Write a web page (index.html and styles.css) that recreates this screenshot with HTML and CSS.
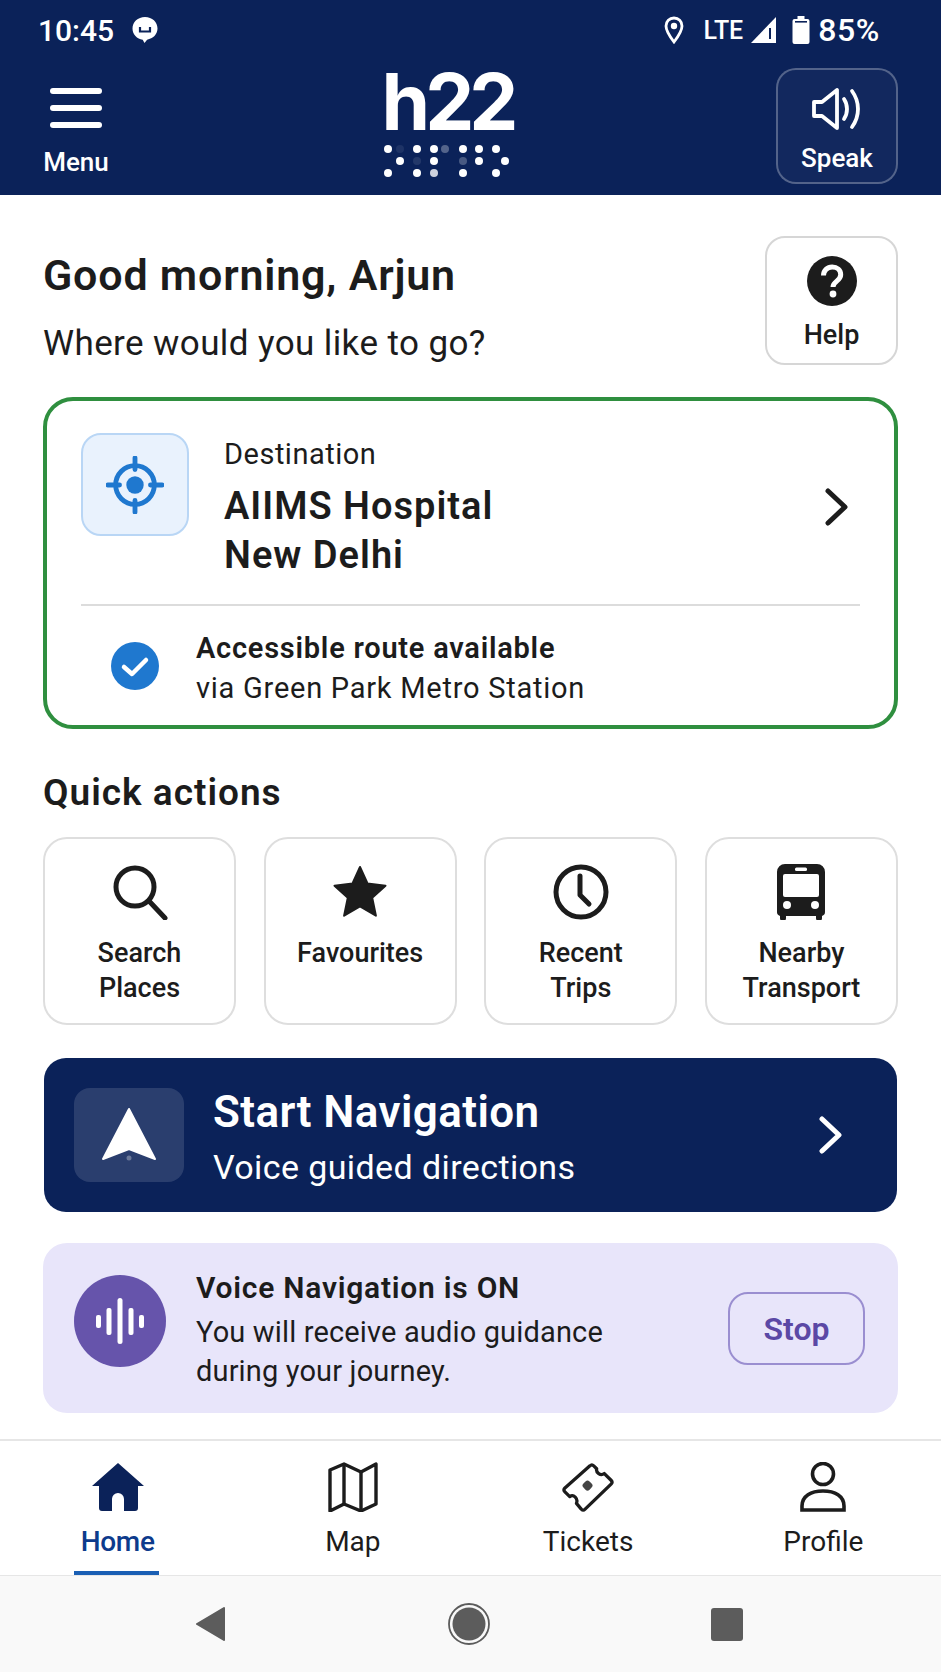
FILE: index.html
```html
<!DOCTYPE html>
<html lang="en">
  <head>
    <meta charset="UTF-8" />
    <meta name="viewport" content="width=device-width, initial-scale=1.0" />
    <title>h22 Home</title>
    <link rel="stylesheet" href="styles.css">
  </head>
  <body>
    <header class="top">
      <div class="status">
        <div class="status-left">
          <span class="time">10:45</span>
          <svg class="msg-icon" viewBox="0 0 28 28"><path d="M14 1C6.800 1 1.500 6 1.500 12.600c0 6 4.600 10.400 10.200 11.200L13.500 27l2.600-3.300C22 22.800 26.500 18.400 26.500 12.600 26.500 6 21.200 1 14 1z" fill="#fff"/><path d="M9 11v4.500h10V11" fill="none" stroke="#0b2259" stroke-width="2.200"/></svg>
        </div>
        <div class="status-right">
          <svg class="pin" viewBox="0 0 20 28"><path d="M10 2C5.400 2 2 5.500 2 10c0 5.500 8 16 8 16s8-10.500 8-16c0-4.500-3.400-8-8-8z" fill="none" stroke="#fff" stroke-width="2.800"/><circle cx="10" cy="10" r="3.200" fill="#fff"/></svg>
          <span class="lte">LTE</span>
          <svg class="signal" viewBox="0 0 27 28"><path d="M26 1v26H1z" fill="#fff"/><rect x="19" y="12" width="2" height="11" fill="#0b2259"/></svg>
          <svg class="battery" viewBox="0 0 18 28"><path d="M5.500 0h7v3h3a2 2 0 0 1 2 2v21a2 2 0 0 1-2 2h-13a2 2 0 0 1-2-2V5a2 2 0 0 1 2-2h3z" fill="#fff"/><rect x="3" y="5" width="12" height="1.600" fill="#0b2259"/></svg>
          <span class="pct">85%</span>
        </div>
      </div>
      <div class="bar">
        <button class="menu">
          <span class="burger"><i></i><i></i><i></i></span>
          <span>Menu</span>
        </button>
        <div class="logo">
          <div class="logo-word">h22</div>
          <svg class="braille" viewBox="0 0 128 36">
            <g fill="#fff">
              <circle cx="5" cy="5" r="4"/><circle cx="34" cy="5" r="4"/><circle cx="51" cy="5" r="4"/>
              <circle cx="80" cy="5" r="4"/><circle cx="96" cy="5" r="4"/><circle cx="113" cy="5" r="4"/>
              <circle cx="17" cy="17" r="4"/><circle cx="51" cy="17" r="4"/><circle cx="96" cy="17" r="4"/><circle cx="122" cy="17" r="4"/>
              <circle cx="5" cy="29" r="4"/><circle cx="34" cy="29" r="4"/><circle cx="51" cy="29" r="4" opacity=".8"/>
              <circle cx="80" cy="29" r="4"/><circle cx="113" cy="29" r="4"/>
              <circle cx="17" cy="5" r="4" opacity=".08"/><circle cx="62" cy="5" r="4" opacity=".3"/>
              <circle cx="34" cy="17" r="4" opacity=".1"/><circle cx="80" cy="17" r="4" opacity=".25"/>
            </g>
          </svg>
        </div>
        <button class="speak">
          <svg class="speak-icon" viewBox="0 0 50 42" fill="none" stroke="#fff" stroke-width="3.800" stroke-linejoin="round" stroke-linecap="round"><path d="M2 14h8L25 2v38L10 28H2z"/><path d="M32 11c4 6 4 14 0 20"/><path d="M40 3c8 11 8 25 0 36"/></svg>
          <span>Speak</span>
        </button>
      </div>
    </header>

    <main class="content">
      <section class="hello">
        <div class="hello-text">
          <h1>Good morning, Arjun</h1>
          <p>Where would you like to go?</p>
        </div>
        <button class="help">
          <svg class="help-icon" viewBox="0 0 52 52"><circle cx="26" cy="26" r="25" fill="#1c1c1c"/><path d="M17.500 20.500c0-5 3.800-8.500 8.700-8.500s8.500 3.200 8.500 7.800c0 6.200-7.700 6.400-7.700 12.200" fill="none" stroke="#fff" stroke-width="5"/><circle cx="27" cy="39" r="3.400" fill="#fff"/></svg>
          <span>Help</span>
        </button>
      </section>

      <section class="dest">
        <div class="dest-top">
          <div class="target">
            <svg viewBox="0 0 60 60" fill="none" stroke="#1f78cf" stroke-width="5"><circle cx="30" cy="30" r="20"/><path d="M30 2v12M30 46v12M2 30h12M46 30h12" stroke-linecap="round"/><circle cx="30" cy="30" r="9" fill="#1f78cf" stroke="none"/></svg>
          </div>
          <div class="dest-text">
            <div class="dest-label">Destination</div>
            <div class="dest-name">AIIMS Hospital<br>New Delhi</div>
          </div>
          <svg class="chev" viewBox="0 0 24 38" fill="none" stroke="#1c1c1c" stroke-width="5" stroke-linecap="round" stroke-linejoin="round"><path d="M3 3l17 16L3 35"/></svg>
        </div>
        <div class="dest-route">
          <svg class="check" viewBox="0 0 48 48"><circle cx="24" cy="24" r="24" fill="#1f78cf"/><path d="M13 25l8 7 14-14" fill="none" stroke="#fff" stroke-width="4.500" stroke-linecap="round" stroke-linejoin="round"/></svg>
          <div>
            <div class="route-title">Accessible route available</div>
            <div class="route-sub">via Green Park Metro Station</div>
          </div>
        </div>
      </section>

      <h2 class="section-title">Quick actions</h2>
      <section class="quick">
        <button class="tile">
          <svg viewBox="0 0 56 56" fill="none" stroke="#1c1c1c" stroke-width="5"><circle cx="23" cy="23" r="19"/><path d="M37 37l16 17" stroke-linecap="round"/></svg>
          <span>Search<br>Places</span>
        </button>
        <button class="tile">
          <svg viewBox="0 0 56 56"><path d="M28 3l7.500 16.500 18 2.200-13.300 12 3.700 18L28 42.500 12.100 51.700l3.700-18L2.500 21.700l18-2.200z" fill="#1c1c1c" stroke="#1c1c1c" stroke-width="2" stroke-linejoin="round"/></svg>
          <span>Favourites</span>
        </button>
        <button class="tile">
          <svg viewBox="0 0 56 56" fill="none" stroke="#1c1c1c" stroke-width="5"><circle cx="28" cy="28" r="25"/><path d="M27 12v19l9 9" stroke-linecap="round" stroke-linejoin="round"/></svg>
          <span>Recent<br>Trips</span>
        </button>
        <button class="tile">
          <svg viewBox="0 0 56 56"><path d="M12 0h32a8 8 0 0 1 8 8v40a4 4 0 0 1-3 3.900V54a3 3 0 0 1-6 0v-2H13v2a3 3 0 0 1-6 0v-2.100A4 4 0 0 1 4 48V8a8 8 0 0 1 8-8z" fill="#1c1c1c"/><rect x="10" y="10" width="36" height="23" rx="2" fill="#fff"/><rect x="22" y="3.500" width="12" height="3.500" rx="1.500" fill="#fff"/><circle cx="14" cy="41" r="4" fill="#fff"/><circle cx="42" cy="41" r="4" fill="#fff"/></svg>
          <span>Nearby<br>Transport</span>
        </button>
      </section>

      <button class="start">
        <span class="start-icon">
          <svg viewBox="0 0 56 56"><path d="M28 2L54 52 28 42 2 52z" fill="#fff" stroke="#fff" stroke-width="2" stroke-linejoin="round"/><circle cx="28" cy="51" r="2.500" fill="#fff" opacity=".3"/></svg>
        </span>
        <span class="start-text">
          <span class="start-title">Start Navigation</span>
          <span class="start-sub">Voice guided directions</span>
        </span>
        <svg class="chev" viewBox="0 0 24 38" fill="none" stroke="#fff" stroke-width="5" stroke-linecap="round" stroke-linejoin="round"><path d="M3 3l17 16L3 35"/></svg>
      </button>

      <section class="voice">
        <div class="voice-icon">
          <svg viewBox="0 0 48 46" fill="#fff"><rect x="0" y="17" width="5" height="13" rx="2"/><rect x="10.500" y="10" width="5" height="27" rx="2"/><rect x="21.500" y="0" width="5" height="46" rx="2.500"/><rect x="32.500" y="10" width="5" height="27" rx="2"/><rect x="43" y="17" width="5" height="13" rx="2"/></svg>
        </div>
        <div class="voice-text">
          <div class="voice-title">Voice Navigation is ON</div>
          <div class="voice-sub">You will receive audio guidance<br>during your journey.</div>
        </div>
        <button class="stop">Stop</button>
      </section>
    </main>

    <nav class="tabs">
      <a class="tab active">
        <svg viewBox="0 0 52 50"><path d="M26 1L52 24H46V46a3 3 0 0 1-3 3H32V37a6 6 0 0 0-12 0V49H10a3 3 0 0 1-3-3V24H0z" fill="#0b2259"/></svg>
        <span>Home</span>
      </a>
      <a class="tab">
        <svg viewBox="0 0 50 50" fill="none" stroke="#1c1c1c" stroke-width="3.400" stroke-linejoin="round"><path d="M2 8l14-6 17 8 15-8v40l-15 7-17-7-14 7z"/><path d="M16 2v40M33 10v39"/></svg>
        <span>Map</span>
      </a>
      <a class="tab">
        <svg viewBox="0 0 54 52" fill="none" stroke="#1c1c1c" stroke-width="3.400" stroke-linejoin="round"><path d="M29 4Q31 2 33 4L36 7C35 11 40 15 44 12L51 19Q53 21 51 23L24 49Q22 51 20 49L15 43C17 38 12 33 8 36L3 31Q1 29 3 27z"/><rect x="22" y="20" width="9" height="9" rx="3" transform="rotate(45 26.500 24.500)" fill="#444" stroke="none"/></svg>
        <span>Tickets</span>
      </a>
      <a class="tab">
        <svg viewBox="0 0 46 50" fill="none" stroke="#1c1c1c" stroke-width="3.600"><circle cx="23" cy="12" r="10.500"/><path d="M2 48v-4c0-10 9-15 21-15s21 5 21 15v4z"/></svg>
        <span>Profile</span>
      </a>
    </nav>

    <footer class="sysbar">
      <svg class="sys-back" viewBox="0 0 31 34"><path d="M29 1L2 17l27 16z" fill="#5c5c5c" stroke="#5c5c5c" stroke-width="2" stroke-linejoin="round"/></svg>
      <svg class="sys-home" viewBox="0 0 42 42"><circle cx="21" cy="21" r="20" fill="none" stroke="#5c5c5c" stroke-width="1.800"/><circle cx="21" cy="21" r="16.500" fill="#5c5c5c"/></svg>
      <span class="sys-recent"></span>
    </footer>
  </body>
</html>
```

FILE: styles.css
```css
* {
  margin: 0;
  padding: 0;
  box-sizing: border-box;
  font-family: Roboto, "Liberation Sans", sans-serif;
}
html, body {
  height: 100%;
}
body {
  width: 941px;
  height: 1672px;
  display: flex;
  flex-direction: column;
  background-color: #fff;
  color: #1c1c1c;
  overflow: hidden;
}
button {
  background: none;
  border: none;
  color: inherit;
}

/* header */
.top {
  height: 195px;
  background-color: #0b2259;
  color: #fff;
  padding: 0 43px;
}
.status {
  height: 60px;
  margin: 0 18px 8px -5px;
  display: flex;
  justify-content: space-between;
  align-items: center;
}
.status-left, .status-right {
  display: flex;
  align-items: center;
}
.time {
  font-size: 30px;
  font-weight: 500;
}
.msg-icon {
  width: 28px;
  height: 28px;
  margin-left: 17px;
}
.pin {
  width: 20px;
  height: 28px;
}
.lte {
  font-size: 25px;
  font-weight: 500;
  margin-left: 19px;
}
.signal {
  width: 27px;
  height: 28px;
  margin-left: 7px;
}
.battery {
  width: 18px;
  height: 28px;
  margin-left: 15px;
}
.pct {
  font-size: 32px;
  font-weight: 500;
  letter-spacing: 0.6px;
  margin-left: 8px;
}
.bar {
  height: 116px;
  display: flex;
  justify-content: space-between;
  align-items: center;
}
.menu {
  width: 66px;
  display: flex;
  flex-direction: column;
  align-items: center;
  gap: 19px;
  font-size: 26px;
  font-weight: 500;
  padding-top: 12px;
}
.burger {
  width: 52px;
  display: flex;
  flex-direction: column;
  gap: 11px;
}
.burger i {
  display: block;
  height: 6px;
  border-radius: 3px;
  background-color: #fff;
}
.logo {
  display: flex;
  flex-direction: column;
  align-items: center;
  margin-left: 10px;
}
.logo-word {
  font-family: Inter, sans-serif;
  font-size: 78px;
  line-height: 72px;
  font-weight: 700;
  letter-spacing: -5px;
  margin-top: -6px;
}
.braille {
  display: block;
  width: 128px;
  height: 36px;
  margin-top: 6px;
}
.speak {
  width: 122px;
  height: 116px;
  border: 2px solid rgba(255, 255, 255, 0.28);
  border-radius: 20px;
  background-color: rgba(255, 255, 255, 0.03);
  display: flex;
  flex-direction: column;
  align-items: center;
  font-size: 26px;
  font-weight: 500;
  padding-top: 18px;
  gap: 13px;
}
.speak-icon {
  width: 50px;
  height: 42px;
}

/* main */
.content {
  flex: 1;
  padding: 41px 43px 0;
}
.hello {
  display: flex;
  justify-content: space-between;
}
.hello-text {
  padding-top: 16px;
}
.hello-text h1 {
  font-size: 43px;
  line-height: 46px;
  font-weight: 600;
  letter-spacing: 0.8px;
}
.hello-text p {
  font-size: 35px;
  line-height: 40px;
  letter-spacing: 0.4px;
  margin-top: 26px;
}
.help {
  width: 133px;
  height: 129px;
  border: 2px solid #d6d6d6;
  border-radius: 20px;
  display: flex;
  flex-direction: column;
  align-items: center;
  font-size: 27px;
  font-weight: 500;
  padding-top: 17px;
  gap: 12px;
}
.help-icon {
  width: 52px;
  height: 52px;
}
.dest {
  margin-top: 32px;
  height: 332px;
  border: 4px solid #2f8f3f;
  border-radius: 30px;
  padding: 32px 34px 0;
}
.dest-top {
  height: 173px;
  display: flex;
  align-items: flex-start;
  border-bottom: 2px solid #dcdcdc;
}
.target {
  width: 108px;
  height: 103px;
  border: 2px solid #b9d6f5;
  border-radius: 20px;
  background-color: #e9f2fd;
  display: flex;
  justify-content: center;
  align-items: center;
}
.target svg {
  width: 58px;
  height: 58px;
}
.dest-text {
  flex: 1;
  margin-left: 35px;
  padding-top: 4px;
}
.dest-label {
  font-size: 29px;
  line-height: 34px;
  letter-spacing: 0.5px;
}
.dest-name {
  font-size: 38px;
  line-height: 49px;
  font-weight: 600;
  letter-spacing: 1px;
  margin-top: 11px;
}
.dest .chev {
  width: 24px;
  height: 38px;
  margin: 55px 11px 0 0;
}
.dest-route {
  display: flex;
  align-items: center;
  padding: 24px 0 0 30px;
}
.check {
  width: 48px;
  height: 48px;
  margin: 0 37px 4px 0;
}
.route-title {
  font-size: 29px;
  line-height: 36px;
  font-weight: 600;
  letter-spacing: 0.75px;
}
.route-sub {
  font-size: 29px;
  line-height: 36px;
  letter-spacing: 0.75px;
  margin-top: 4px;
}
.section-title {
  font-size: 37px;
  line-height: 44px;
  font-weight: 600;
  letter-spacing: 1px;
  margin-top: 42px;
}
.quick {
  display: flex;
  justify-content: space-between;
  margin-top: 22px;
}
.tile {
  width: 193px;
  height: 188px;
  border: 2px solid #dedede;
  border-radius: 24px;
  display: flex;
  flex-direction: column;
  align-items: center;
  font-size: 27px;
  line-height: 35px;
  font-weight: 500;
  padding-top: 25px;
  gap: 16px;
}
.tile svg {
  width: 56px;
  height: 56px;
}
.start {
  width: 853px;
  height: 154px;
  margin: 33px 1px 0;
  background-color: #0b2259;
  color: #fff;
  border-radius: 22px;
  display: flex;
  align-items: center;
  padding: 0 54px 0 30px;
  text-align: left;
}
.start-icon {
  width: 110px;
  height: 94px;
  border-radius: 16px;
  background-color: rgba(255, 255, 255, 0.13);
  display: flex;
  justify-content: center;
  align-items: center;
}
.start-icon svg {
  width: 56px;
  height: 56px;
}
.start-text {
  flex: 1;
  margin-left: 29px;
  padding-top: 4px;
  display: flex;
  flex-direction: column;
}
.start-title {
  font-size: 44px;
  line-height: 50px;
  font-weight: 600;
  letter-spacing: 0.4px;
}
.start-sub {
  font-size: 34px;
  line-height: 40px;
  letter-spacing: 0.4px;
  margin-top: 10px;
}
.start .chev {
  width: 24px;
  height: 38px;
}
.voice {
  height: 170px;
  margin-top: 31px;
  background-color: #e8e5fa;
  border-radius: 24px;
  display: flex;
  align-items: center;
  padding: 0 33px 0 31px;
}
.voice-icon {
  width: 92px;
  height: 92px;
  margin-bottom: 14px;
  border-radius: 50%;
  background-color: #6654ab;
  display: flex;
  justify-content: center;
  align-items: center;
}
.voice-icon svg {
  width: 48px;
  height: 46px;
}
.voice-text {
  flex: 1;
  margin-left: 30px;
  padding-top: 4px;
}
.voice-title {
  font-size: 30px;
  line-height: 38px;
  font-weight: 600;
  letter-spacing: 0.75px;
}
.voice-sub {
  font-size: 29px;
  line-height: 39px;
  letter-spacing: 0.15px;
  margin-top: 6px;
}
.stop {
  width: 137px;
  height: 73px;
  border: 2px solid #9a8ed0;
  border-radius: 20px;
  font-size: 32px;
  font-weight: 600;
  color: #5b48a5;
  padding-top: 2px;
}

/* bottom nav */
.tabs {
  height: 137px;
  border-top: 2px solid #e6e6e6;
  border-bottom: 1px solid #e6e6e6;
  display: flex;
  background-color: #fff;
}
.tab {
  flex: 1;
  display: flex;
  flex-direction: column;
  align-items: center;
  padding-top: 21px;
  font-size: 28px;
  font-weight: 400;
  gap: 13px;
}
.tab svg {
  width: 52px;
  height: 50px;
}
.tab.active {
  color: #0d3b8c;
  font-weight: 500;
  letter-spacing: -0.3px;
  position: relative;
}
.tab.active::after {
  content: "";
  position: absolute;
  bottom: 0;
  left: 74px;
  width: 85px;
  height: 4px;
  background-color: #1a5fb4;
}
.sysbar {
  height: 96px;
  background-color: #f9f9f9;
  display: flex;
  align-items: center;
  justify-content: space-between;
  padding: 0 198px 0 195px;
}
.sys-back {
  width: 31px;
  height: 34px;
}
.sys-home {
  width: 42px;
  height: 42px;
}
.sys-recent {
  width: 32px;
  height: 33px;
  background-color: #5c5c5c;
  border-radius: 3px;
}
```
